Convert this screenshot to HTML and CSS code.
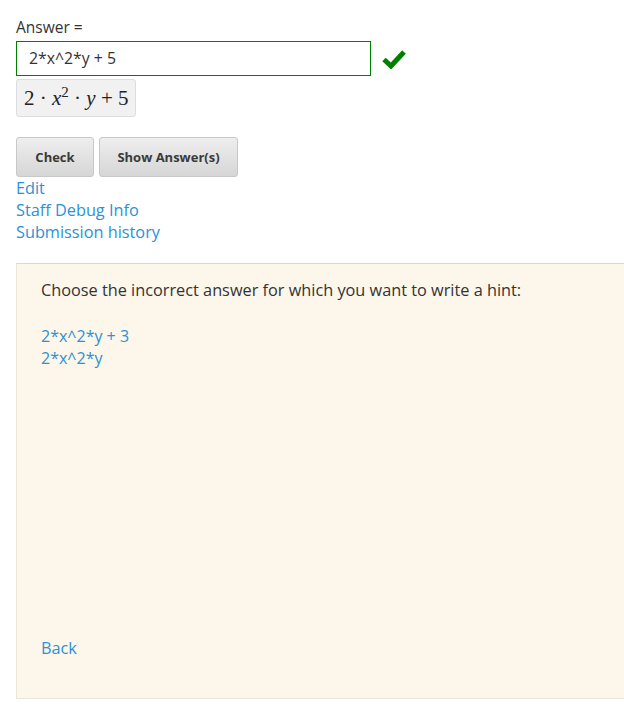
FILE: index.html
```html
<!DOCTYPE html>
<html>
<head>
<meta charset="utf-8">
<link rel="stylesheet" href="styles.css">
</head>
<body>
<div class="problem">
  <label class="label">Answer =</label>
  <div class="input-row">
    <div class="answer-input">2*x^2*y + 5</div>
    <svg class="check" width="24" height="20" viewBox="0 0 24 20"><path d="M2 10.5 L9 17 L22 3" fill="none" stroke="#008000" stroke-width="5" stroke-linejoin="miter"/></svg>
  </div>
  <div class="math">2 · <i>x</i><sup>2</sup> · <i>y</i> + 5</div>
  <div class="actions">
    <button class="btn btn-check">Check</button>
    <button class="btn btn-show">Show Answer(s)</button>
  </div>
  <div class="links">
    <a href="#">Edit</a>
    <a href="#">Staff Debug Info</a>
    <a href="#">Submission history</a>
  </div>
</div>
<div class="panel">
  <p class="prompt">Choose the incorrect answer for which you want to write a hint:</p>
  <div class="answers">
    <a href="#">2*x^2*y + 3</a>
    <a href="#">2*x^2*y</a>
  </div>
  <a class="back" href="#">Back</a>
</div>
</body>
</html>
```
FILE: styles.css
```css
html, body {
  margin: 0;
  padding: 0;
  background: #fff;
}
body {
  font-family: "Open Sans", "Noto Sans", sans-serif;
  color: #333;
  font-size: 14px;
}
.problem {
  padding: 17px 0 0 16px;
}
.label {
  display: block;
  font-size: 15.5px;
  line-height: 20px;
  color: #333;
  margin-bottom: 4px;
}
.input-row {
  display: flex;
  align-items: center;
  gap: 11px;
}
.answer-input {
  box-sizing: border-box;
  width: 355px;
  height: 35px;
  border: 1px solid #008000;
  padding: 0 12px;
  font-size: 15.8px;
  line-height: 33px;
  color: #333;
}
.check {
  display: block;
  margin-top: 1px;
}
.math {
  display: inline-block;
  box-sizing: border-box;
  margin-top: 3px;
  height: 38px;
  padding: 0 6px 0 7px;
  background: #f1f1f1;
  border: 1px solid #ddd;
  border-radius: 3px;
  font-family: "Liberation Serif", "DejaVu Serif", serif;
  font-size: 21px;
  line-height: 36px;
  color: #222;
}
.math sup {
  font-size: 15px;
  line-height: 0;
  vertical-align: 8px;
}
.actions {
  display: flex;
  gap: 5px;
  margin-top: 20px;
}
.btn {
  box-sizing: border-box;
  height: 40px;
  border: 1px solid #c8c8c8;
  border-radius: 3px;
  background: linear-gradient(#eeeeee, #d6d6d6);
  font-family: "Open Sans", "Noto Sans", sans-serif;
  font-weight: bold;
  font-size: 13px;
  color: #3a3a3a;
  padding: 0;
}
.btn-check { width: 78px; }
.btn-show { width: 139px; }
.links {
  display: flex;
  flex-direction: column;
}
.links a, .answers a, .back {
  color: #2a92d8;
  text-decoration: none;
  font-size: 16.3px;
  line-height: 22px;
}
.links a { display: block; }
.panel {
  margin: 20px 0 0 16px;
  box-sizing: border-box;
  height: 436px;
  background: #fdf6ea;
  border: 1px solid #ebe6dc;
  border-right: none;
  border-top-color: #dcd8cf;
  padding: 15px 24px 0 24px;
  display: flex;
  flex-direction: column;
}
.prompt {
  margin: 0;
  font-size: 16.3px;
  line-height: 22px;
  color: #333;
}
.answers {
  display: flex;
  flex-direction: column;
  margin-top: 24px;
}
.answers a {
  font-size: 16px;
}
.back {
  margin-top: auto;
  margin-bottom: 39px;
  align-self: flex-start;
}
```
